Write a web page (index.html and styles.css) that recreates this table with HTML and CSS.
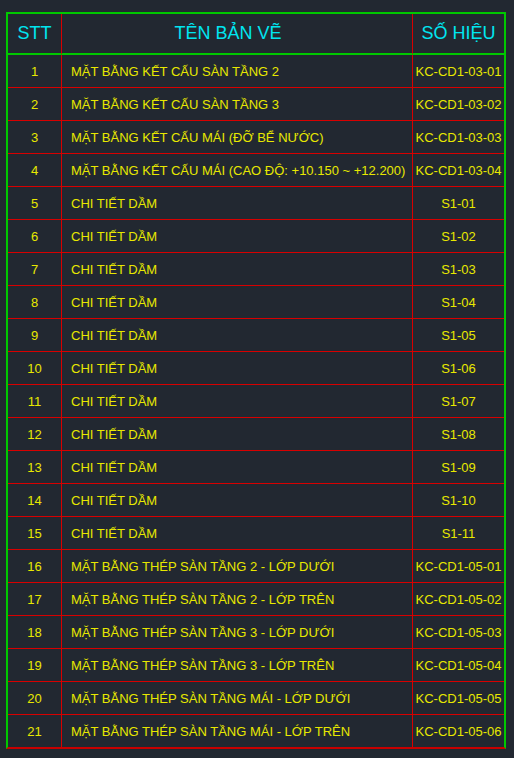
FILE: index.html
```html
<html>

<head>
  <meta name="viewport" content="width=device-width, initial-scale=1">
  <link rel="stylesheet" href="styles.css">
</head>

<body>
  <!-- Drawing list table -->
  <table class="sheet_list">
    <colgroup>
      <col class="col_no">
      <col class="col_name">
      <col class="col_code">
    </colgroup>
    <thead>
      <tr>
        <th>STT</th>
        <th class="name_head">TÊN BẢN VẼ</th>
        <th>SỐ HIỆU</th>
      </tr>
    </thead>
    <tbody>
      <tr><td>1</td><td class="name">MẶT BẰNG KẾT CẤU SÀN TẦNG 2</td><td>KC-CD1-03-01</td></tr>
      <tr><td>2</td><td class="name">MẶT BẰNG KẾT CẤU SÀN TẦNG 3</td><td>KC-CD1-03-02</td></tr>
      <tr><td>3</td><td class="name">MẶT BẰNG KẾT CẤU MÁI (ĐỠ BỂ NƯỚC)</td><td>KC-CD1-03-03</td></tr>
      <tr><td>4</td><td class="name">MẶT BẰNG KẾT CẤU MÁI (CAO ĐỘ: +10.150 ~ +12.200)</td><td>KC-CD1-03-04</td></tr>
      <tr><td>5</td><td class="name">CHI TIẾT DẦM</td><td>S1-01</td></tr>
      <tr><td>6</td><td class="name">CHI TIẾT DẦM</td><td>S1-02</td></tr>
      <tr><td>7</td><td class="name">CHI TIẾT DẦM</td><td>S1-03</td></tr>
      <tr><td>8</td><td class="name">CHI TIẾT DẦM</td><td>S1-04</td></tr>
      <tr><td>9</td><td class="name">CHI TIẾT DẦM</td><td>S1-05</td></tr>
      <tr><td>10</td><td class="name">CHI TIẾT DẦM</td><td>S1-06</td></tr>
      <tr><td>11</td><td class="name">CHI TIẾT DẦM</td><td>S1-07</td></tr>
      <tr><td>12</td><td class="name">CHI TIẾT DẦM</td><td>S1-08</td></tr>
      <tr><td>13</td><td class="name">CHI TIẾT DẦM</td><td>S1-09</td></tr>
      <tr><td>14</td><td class="name">CHI TIẾT DẦM</td><td>S1-10</td></tr>
      <tr><td>15</td><td class="name">CHI TIẾT DẦM</td><td>S1-11</td></tr>
      <tr><td>16</td><td class="name">MẶT BẰNG THÉP SÀN TẦNG 2 - LỚP DƯỚI</td><td>KC-CD1-05-01</td></tr>
      <tr><td>17</td><td class="name">MẶT BẰNG THÉP SÀN TẦNG 2 - LỚP TRÊN</td><td>KC-CD1-05-02</td></tr>
      <tr><td>18</td><td class="name">MẶT BẰNG THÉP SÀN TẦNG 3 - LỚP DƯỚI</td><td>KC-CD1-05-03</td></tr>
      <tr><td>19</td><td class="name">MẶT BẰNG THÉP SÀN TẦNG 3 - LỚP TRÊN</td><td>KC-CD1-05-04</td></tr>
      <tr><td>20</td><td class="name">MẶT BẰNG THÉP SÀN TẦNG MÁI - LỚP DƯỚI</td><td>KC-CD1-05-05</td></tr>
      <tr><td>21</td><td class="name">MẶT BẰNG THÉP SÀN TẦNG MÁI - LỚP TRÊN</td><td>KC-CD1-05-06</td></tr>
    </tbody>
  </table>
</body>

</html>
```

FILE: styles.css
```css
body {
  margin: 0;
  padding: 12px 0 0 6px;
  background: #222831;
  font-family: 'Liberation Sans', Arial, sans-serif;
}

.sheet_list {
  width: 500px;
  table-layout: fixed;
  border-collapse: separate;
  border-spacing: 0;
  border: 2px solid #00c800;
  border-bottom-color: #c80000;
}

.col_no {
  width: 53px;
}

.col_name {
  width: 351px;
}

.col_code {
  width: 92px;
}

th {
  height: 41px;
  padding: 0;
  font-size: 18px;
  font-weight: normal;
  color: #00e5f0;
  text-align: center;
  border-bottom: 2px solid #00c800;
}

th + th,
td + td {
  border-left: 1px solid #d80000;
}

.name_head {
  padding-right: 18px;
}

td {
  height: 33px;
  padding: 0;
  font-size: 13px;
  color: #e8e800;
  text-align: center;
  white-space: nowrap;
  border-bottom: 1px solid #d80000;
}

tbody tr:last-child td {
  height: 32px;
  border-bottom: none;
}

td.name {
  text-align: left;
  padding-left: 9px;
}
```
